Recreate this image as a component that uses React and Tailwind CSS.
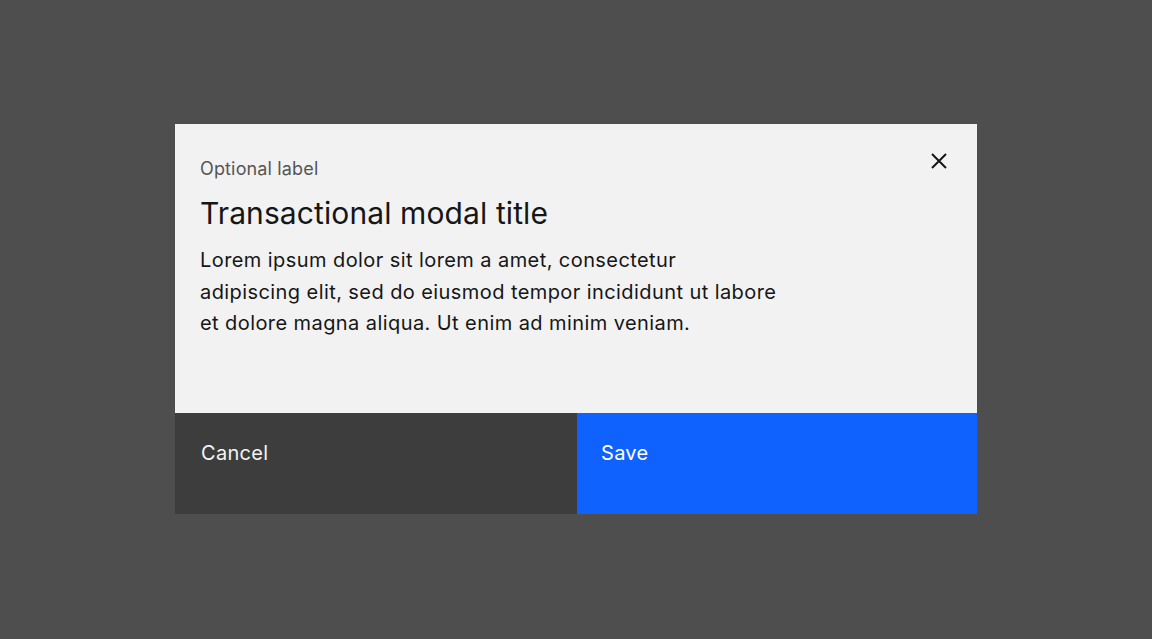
import React from "react";

export default function App() {
  const font = { fontFamily: 'Inter, "Noto Sans", sans-serif' };
  return (
    <div className="w-full h-[639px] bg-[#4e4e4e] flex items-center justify-center pb-[1px]" style={font}>
      <div className="w-[802px] h-[390px] flex flex-col bg-[#f2f2f2]">
        <div className="relative flex-1 pl-[25px] pr-[25px] pt-[34px]">
          <div className="text-[18px] leading-[22px] tracking-[0.15px] text-[#565656]">Optional label</div>
          <div className="mt-[17px] text-[30px] leading-[32px] tracking-[0.1px] text-[#161616]">Transactional modal title</div>
          <p className="mt-[16px] w-[640px] text-[20px] leading-[31.5px] tracking-[0.42px] text-[#161616]">
            Lorem ipsum dolor sit lorem a amet, consectetur<br />adipiscing elit, sed do eiusmod tempor incididunt ut labore<br />et dolore magna aliqua. Ut enim ad minim veniam.
          </p>
          <button className="absolute right-[22px] top-[21px] w-[32px] h-[32px] flex items-center justify-center text-[#161616]">
            <svg width="20" height="20" viewBox="0 0 20 20" fill="none">
              <path d="M3 3 L17 17 M17 3 L3 17" stroke="currentColor" strokeWidth="2" />
            </svg>
          </button>
        </div>
        <div className="h-[101px] flex">
          <button className="flex-1 bg-[#3d3d3d] text-[#f4f4f4] text-left pl-[26px] flex items-start pt-[27px] text-[20px] leading-[26px] tracking-[0.3px]">Cancel</button>
          <button className="flex-1 bg-[#0f62fe] text-white text-left pl-[24px] flex items-start pt-[27px] text-[20px] leading-[26px] tracking-[0.3px]">Save</button>
        </div>
      </div>
    </div>
  );
}
